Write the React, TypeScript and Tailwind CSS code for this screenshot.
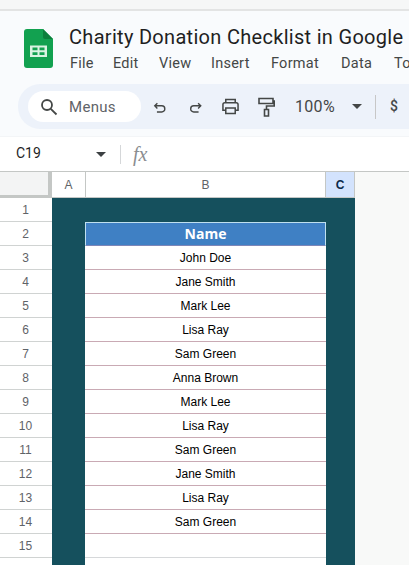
import React from "react";

const names = ["John Doe","Jane Smith","Mark Lee","Lisa Ray","Sam Green","Anna Brown","Mark Lee","Lisa Ray","Sam Green","Jane Smith","Lisa Ray","Sam Green","",""];
const rows = [1,2,3,4,5,6,7,8,9,10,11,12,13,14,15];

function SheetsLogo() {
  return (
    <svg width="29" height="39" viewBox="0 0 29 39">
      <path d="M3 0H19L29 10V36a3 3 0 0 1-3 3H3a3 3 0 0 1-3-3V3a3 3 0 0 1 3-3Z" fill="#12a150" />
      <path d="M19 0L29 10H21a2 2 0 0 1-2-2Z" fill="#0c7f3c" />
      <path d="M6 16.500H23V28H6Z" fill="#d9f3e2" />
      <path d="M8.500 18.500H13.500V21.200H8.500ZM15.500 18.500H20.500V21.200H15.500ZM8.500 23.300H13.500V26H8.500ZM15.500 23.300H20.500V26H15.500Z" fill="#12a150" />
    </svg>
  );
}

const stroke = { fill: "none", stroke: "#444746", strokeWidth: 1.6 };

function Undo() {
  return <svg width="14" height="14" viewBox="0 0 16 16"><path d="M5 2.500 2 5.500l3 3M2.500 5.500H10a3.500 3.500 0 0 1 0 7H4.500" {...stroke} /></svg>;
}
function Redo() {
  return <svg width="15" height="14" viewBox="0 0 16 16"><path d="M11 2.500l3 3-3 3M13.500 5.500H6a3.500 3.500 0 0 0 0 7h5.500" {...stroke} /></svg>;
}
function Printer() {
  return (
    <svg width="19" height="17" viewBox="0 0 20 18">
      <path d="M5 5V1.500H15V5M5 13H2V7a2 2 0 0 1 2-2H16a2 2 0 0 1 2 2V13H15M5 10.500H15V16.500H5Z" {...stroke} />
    </svg>
  );
}
function Roller() {
  return (
    <svg width="17" height="20" viewBox="0 0 17 20">
      <path d="M1 1.500H15V6.500H1ZM15 4H16.200V9H8.500V12.500M6.500 12.500H10.500V19H6.500Z" {...stroke} />
    </svg>
  );
}
function Caret({ color = "#444746" }: { color?: string }) {
  return <div className="w-0 h-0 border-l-[5px] border-r-[5px] border-t-[5px] border-l-transparent border-r-transparent" style={{ borderTopColor: color }} />;
}

export default function App() {
  return (
    <div className="w-[409px] h-[565px] overflow-hidden bg-[#f9fbfd] flex flex-col font-['Open_Sans','Noto_Sans',sans-serif]">
      <div className="h-[9px] bg-[#f6f7f7] border-b-2 border-[#e3e4e4] box-content shrink-0" />
      <div className="h-[72px] shrink-0 flex pl-6">
        <div className="pt-[18px] w-[45px] shrink-0"><SheetsLogo /></div>
        <div className="flex flex-col whitespace-nowrap">
          <div className="text-[20px] leading-[26px] mt-[13px] text-[#1f1f1f] font-['Roboto','Noto_Sans',sans-serif] tracking-[0.3px]">Charity Donation Checklist in Google</div>
          <div className="flex text-[14.500px] leading-5 mt-[4px] ml-[1px] text-[#444746] font-['Roboto',sans-serif] tracking-[0.25px]">
            <span className="w-[43px]">File</span>
            <span className="w-[46px]">Edit</span>
            <span className="w-[52px]">View</span>
            <span className="w-[60px]">Insert</span>
            <span className="w-[70px]">Format</span>
            <span className="w-[53px]">Data</span>
            <span>Tools</span>
          </div>
        </div>
      </div>
      <div className="h-[45px] shrink-0 ml-[18px] bg-[#edf2fa] rounded-l-[22px] flex items-center pl-[10px] whitespace-nowrap mt-[1px]">
        <div className="w-[113px] h-[31px] bg-white rounded-full flex items-center pl-[12px] shrink-0">
          <svg width="18" height="18" viewBox="0 0 18 18"><circle cx="7" cy="7" r="5" fill="none" stroke="#444746" strokeWidth="1.800" /><path d="M10.800 10.800 16.500 16.500" stroke="#444746" strokeWidth="1.800" /></svg>
          <span className="ml-[11px] pt-[1px] text-[15px] text-[#5f6368] font-['Roboto',sans-serif] tracking-[0.3px]">Menus</span>
        </div>
        <div className="ml-[12px] w-[35px] shrink-0 flex pt-[2px]"><Undo /></div>
        <div className="w-[33px] shrink-0 flex pt-[2px]"><Redo /></div>
        <div className="w-[37px] shrink-0 flex"><Printer /></div>
        <div className="w-[37px] shrink-0 flex"><Roller /></div>
        <span className="text-[16px] pt-[1px] text-[#444746] font-['Roboto',sans-serif] w-[57px] shrink-0 tracking-[0.3px]">100%</span>
        <Caret />
        <div className="w-px h-[24px] bg-[#c7c7c7] ml-[13px] shrink-0" />
        <span className="ml-[14px] text-[14px] text-[#444746] font-['Roboto',sans-serif] font-medium">$</span>
      </div>
      <div className="h-[6px] shrink-0" />
      <div className="h-[35px] shrink-0 bg-white flex items-center pl-4 mt-[1px] border-t border-[#f3f5f7]">
        <span className="w-[80px] pb-[2px] text-[14px] text-[#1f1f1f] font-['Roboto',sans-serif]">C19</span>
        <Caret color="#3c4043" />
        <div className="w-px h-[19px] bg-[#d5d7d9] ml-[14px]" />
        <span className="ml-[12px] text-[20px] leading-6 italic text-[#8a8d90] font-['Liberation_Serif',serif]">fx</span>
      </div>
      <div className="flex flex-1 min-h-0 bg-[#f8f9f8] border-t border-[#c4c7c5] text-[12px]">
        <div className="w-[52px] shrink-0 bg-white flex flex-col text-[#5f6368] font-['Liberation_Sans',sans-serif]">
          <div className="h-[26px] shrink-0 bg-[#f3f4f4] border-r-[4px] border-b-[3px] border-[#c4c7c5]" />
          {rows.map((r) => (
            <div key={r} className="h-6 shrink-0 flex items-center justify-center pr-[1px] border-b border-[#d0d3d2]">{r}</div>
          ))}
        </div>
        <div className="w-[303px] shrink-0 flex flex-col">
          <div className="h-[26px] shrink-0 flex bg-white border-b-[1px] border-[#c4c7c5] text-[#5f6368] font-['Liberation_Sans',sans-serif]">
            <div className="w-[34px] flex items-center justify-center border-r border-[#c4c7c5]">A</div>
            <div className="w-[239px] flex items-center justify-center">B</div>
            <div className="flex-1 flex items-center justify-center bg-[#d3e3fd] border-l border-r border-[#c4c7c5] text-[#0b2a4a] font-bold">C</div>
          </div>
          <div className="flex-1 bg-[#15505d] pl-[33px] pt-[24px]">
            <div className="w-[241px] bg-white">
              <div className="h-6 bg-[#3f80c4] border border-[#bfe0f0] border-b-[#7d86b8] flex items-center justify-center pb-[2px] text-white font-bold text-[14px] font-['Open_Sans',sans-serif]">Name</div>
              {names.map((n, i) => (
                <div key={i} className={`h-6 flex items-center justify-center text-black font-['Liberation_Sans',sans-serif] border-b ${i < 12 ? "border-[#c9aab4]" : "border-[#d6d8da]"}`}>{n}</div>
              ))}
            </div>
          </div>
        </div>
        <div className="flex-1" />
      </div>
    </div>
  );
}
